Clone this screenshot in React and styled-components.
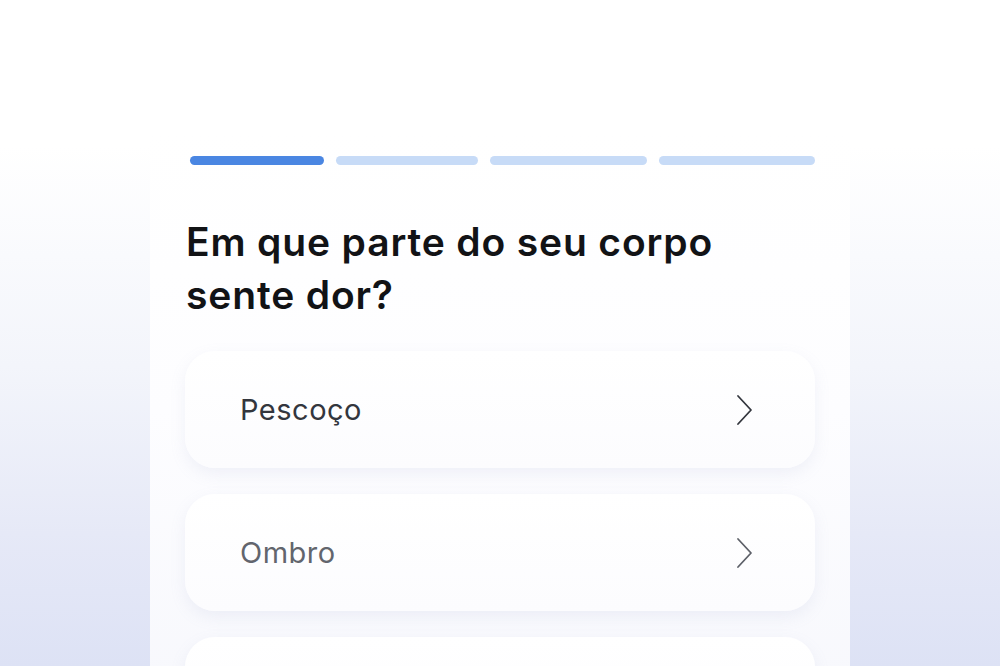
import React from 'react'
import styled, { createGlobalStyle } from 'styled-components'

const GlobalStyle = createGlobalStyle`
  html, body {
    margin: 0;
    padding: 0;
  }
  body {
    font-family: Inter, 'Noto Sans', 'Liberation Sans', sans-serif;
    -webkit-font-smoothing: antialiased;
  }
`

const Page = styled.div`
  height: 666px;
  overflow: hidden;
  background: linear-gradient(
    180deg,
    #ffffff 0%,
    #ffffff 22%,
    #f3f5fb 55%,
    #e6e9f7 80%,
    #dde2f5 100%
  );
`

const Panel = styled.main`
  width: 700px;
  margin: 0 auto;
  margin-top: 130px;
  min-height: 536px;
  box-sizing: border-box;
  padding: 26px 35px 0;
  background: linear-gradient(180deg, #ffffff 0%, #fdfdff 45%, #f6f7fc 100%);
`

const Progress = styled.div`
  display: flex;
  gap: 12px;
  padding-left: 5px;
`

const Step = styled.span`
  display: block;
  height: 9px;
  width: ${(p) => p.$w}px;
  border-radius: 5px;
  background: ${(p) => (p.$active ? '#4a86e2' : '#c7dbf7')};
`

const Title = styled.h1`
  margin: 50px 0 0 1px;
  font-size: 39px;
  line-height: 53px;
  font-weight: 600;
  color: #121316;
  letter-spacing: 0.85px;
`

const Options = styled.div`
  display: flex;
  flex-direction: column;
  gap: 26px;
  margin-top: 30px;
`

const Option = styled.button`
  all: unset;
  box-sizing: border-box;
  display: flex;
  align-items: center;
  justify-content: space-between;
  height: 117px;
  padding: 0 60px 0 55px;
  border-radius: 30px;
  background: linear-gradient(180deg, #ffffff 0%, #fcfcfe 100%);
  box-shadow: 0 6px 16px rgba(150, 160, 195, 0.12);
  cursor: pointer;
`

const Label = styled.span`
  font-size: 29px;
  font-weight: 400;
  letter-spacing: 0.5px;
  color: ${(p) => (p.$muted ? '#62656d' : '#33363d')};
`

const Chevron = ({ color }) => (
  <svg width="20" height="32" viewBox="0 0 20 32" fill="none">
    <path
      d="M3 2 L16 16 L3 30"
      stroke={color}
      strokeWidth="1.8"
      strokeLinecap="round"
      strokeLinejoin="round"
    />
  </svg>
)

const steps = [
  { w: 134, active: true },
  { w: 143 },
  { w: 157 },
  { w: 157 },
]

const parts = ['Pescoço', 'Ombro', 'Costas']

export default function App() {
  return (
    <Page>
      <GlobalStyle />
      <Panel>
        <Progress>
          {steps.map((s, i) => (
            <Step key={i} $w={s.w} $active={s.active} />
          ))}
        </Progress>
        <Title>
          Em que parte do seu corpo
          <br />
          sente dor?
        </Title>
        <Options>
          {parts.map((p, i) => (
            <Option key={p}>
              <Label $muted={i > 0}>{p}</Label>
              <Chevron color={i > 0 ? '#5d6068' : '#33363d'} />
            </Option>
          ))}
        </Options>
      </Panel>
    </Page>
  )
}
